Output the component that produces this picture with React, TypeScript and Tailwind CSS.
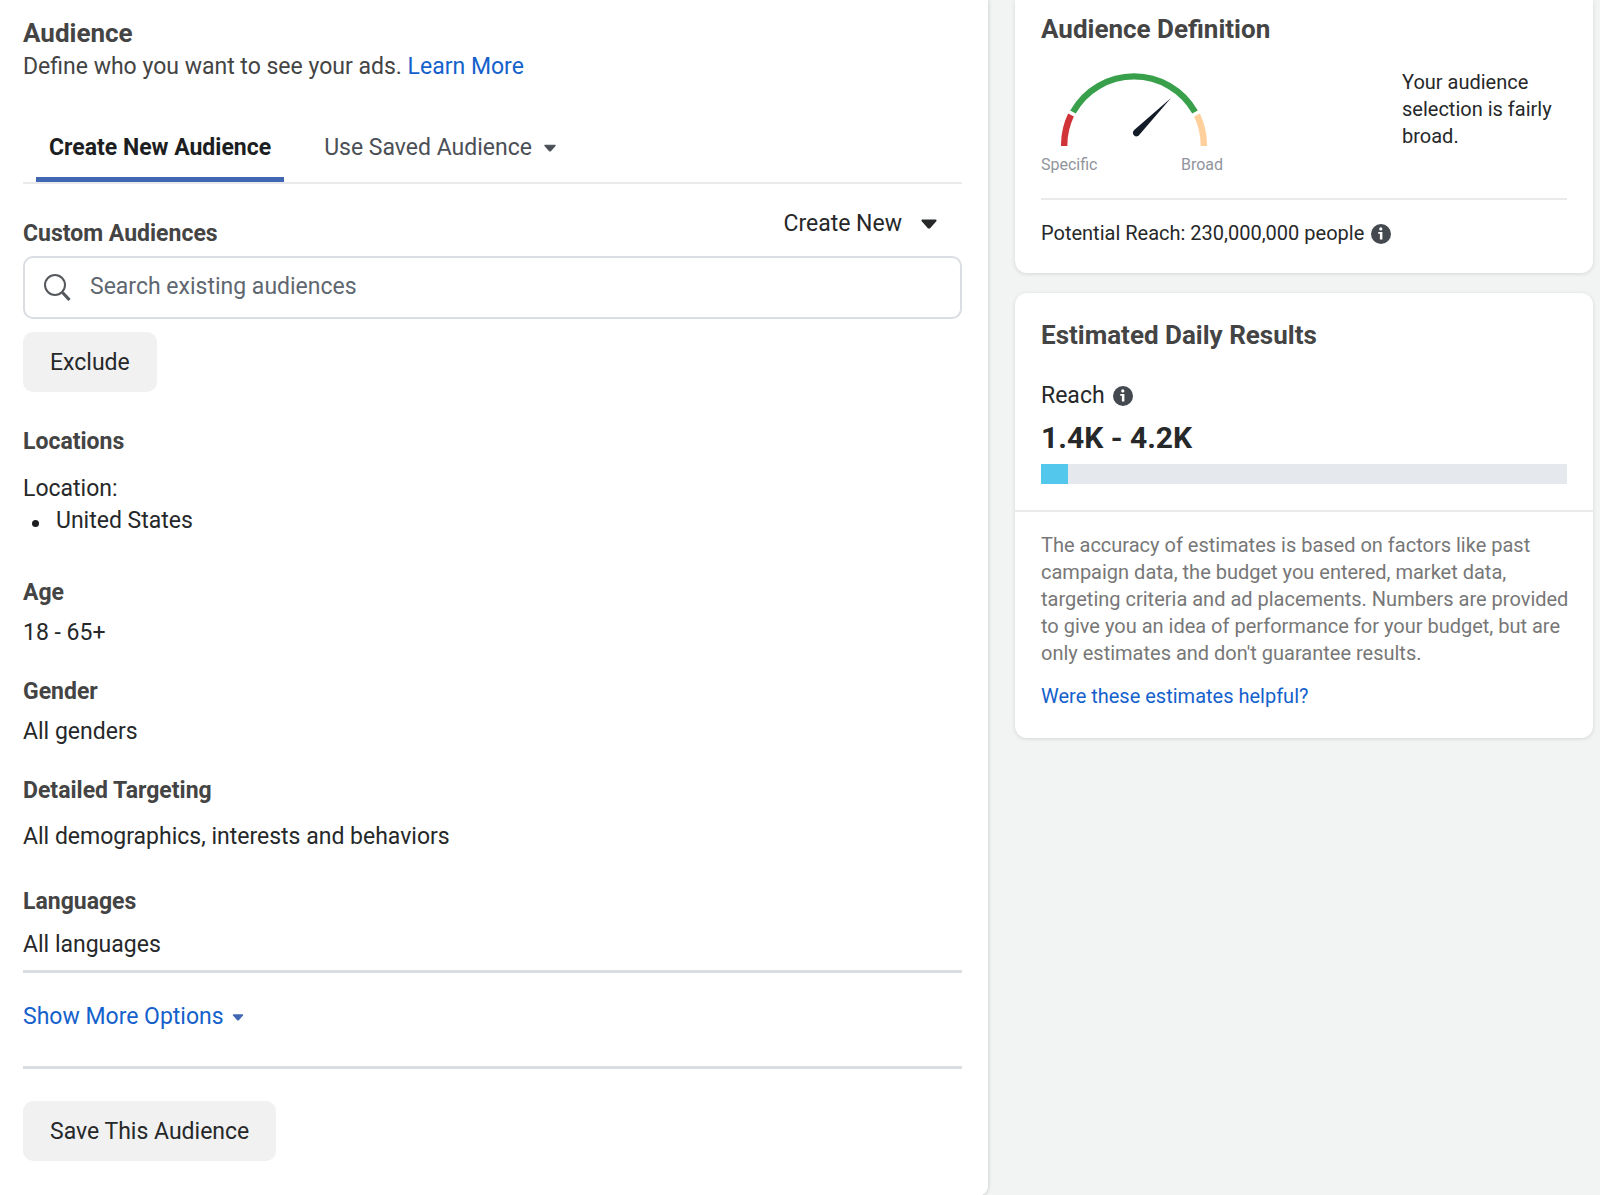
import { useState } from 'react';

const InfoIcon = () => (
  <svg className="h-5 w-5 shrink-0" viewBox="0 0 20 20" aria-hidden="true">
    <circle cx="10" cy="10" r="10" fill="#444950" />
    <circle cx="9.8" cy="4.9" r="1.6" fill="#fff" />
    <path d="M7.2 8h4.2v7.4H8.9V9.7H7.2z" fill="#fff" />
  </svg>
);

const Caret = ({ className = '' }: { className?: string }) => (
  <svg className={className} viewBox="0 0 16 10" aria-hidden="true">
    <path
      d="M1.2 1.2h13.6v.6L9 8.4q-1 1-2 0L1.2 1.8z"
      fill="currentColor"
      stroke="currentColor"
      strokeWidth="1.4"
      strokeLinejoin="round"
    />
  </svg>
);

const Gauge = () => (
  <svg className="ml-5 h-[73px] w-[146px]" viewBox="0 0 146 73" fill="none" aria-hidden="true">
    <path d="M3.2 73A70 70 0 0 1 10 42" stroke="#d13438" strokeWidth="6.4" />
    <path d="M12 39A70 70 0 0 1 134 39" stroke="#38a04a" strokeWidth="6.4" />
    <path d="M136 42A70 70 0 0 1 142.8 73" stroke="#ffd09b" strokeWidth="6.4" />
    <path d="M110 25L78.6 61.6A3.6 3.6 0 1 1 73.2 57z" fill="#141b28" />
  </svg>
);

export default function App() {
  const [query, setQuery] = useState('');
  const reachPercent = 5.1;

  return (
    <div className="grid min-h-screen grid-cols-[988fr_578fr] items-start gap-[27px] bg-[#f2f4f4] pr-[7px] font-['Roboto',sans-serif] text-[23px] leading-8 text-[#262829]">
      {/* Audience form */}
      <main className="min-w-0 rounded-br-[10px] bg-white pt-[15px] pr-[26px] pb-[35px] pl-[23px] shadow-[0_0_4px_rgba(0,0,0,0.2)]">
        <h1 className="text-[26px] leading-9 font-bold text-[#444]">Audience</h1>
        <p className="text-[#444]">
          Define who you want to see your ads.{' '}
          <a href="#learn" className="text-[#1461cc]">Learn More</a>
        </p>

        <div role="tablist" className="mt-[49px] flex gap-[27px] border-b-2 border-[#e9eaeb] px-[13px]">
          <button
            role="tab"
            aria-selected="true"
            className="border-b-[5px] border-[#4267b2] px-[13px] pb-[13px] font-bold text-[#1c1e21]"
          >
            Create New Audience
          </button>
          <button
            role="tab"
            aria-selected="false"
            className="flex items-center gap-3 border-b-[5px] border-transparent px-[13px] pb-[13px] text-[#4b4f56]"
          >
            Use Saved Audience
            <Caret className="h-2 w-3" />
          </button>
        </div>

        <div className="mt-6 flex items-end justify-between">
          <label htmlFor="audience-search" className="font-bold text-[#444]">Custom Audiences</label>
          <button className="flex items-center gap-[19px] pr-[25px] pb-[10px]">
            Create New
            <Caret className="h-[10px] w-4" />
          </button>
        </div>
        <div className="mt-[6px] flex h-[63px] items-center gap-[19px] rounded-[10px] border-2 border-[#dadde1] px-[19px]">
          <svg className="h-7 w-[27px] shrink-0" viewBox="0 0 27 28" fill="none" stroke="#55585c" aria-hidden="true">
            <circle cx="11" cy="11" r="10" strokeWidth="2" />
            <path d="M18.5 18.5l7 7.5" strokeWidth="3.2" />
          </svg>
          <input
            id="audience-search"
            type="text"
            value={query}
            onChange={(e) => setQuery(e.target.value)}
            placeholder="Search existing audiences"
            className="min-w-0 flex-1 bg-transparent pb-px outline-none placeholder:text-[#606770]"
          />
        </div>
        <button className="mt-[13px] h-[60px] rounded-[10px] bg-[#f1f1f1] px-[27px] pt-px">Exclude</button>

        <section className="mt-[34px]">
          <h2 className="font-bold text-[#444]">Locations</h2>
          <p className="mt-[15px]">Location:</p>
          <ul>
            <li className="flex items-center gap-[17px] pl-[9px] before:mt-[5px] before:h-[7px] before:w-[7px] before:rounded-full before:bg-[#1c1e21]">
              United States
            </li>
          </ul>
        </section>
        <section className="mt-10">
          <h2 className="font-bold text-[#444]">Age</h2>
          <p className="mt-2">18 - 65+</p>
        </section>
        <section className="mt-[27px]">
          <h2 className="font-bold text-[#444]">Gender</h2>
          <p className="mt-2">All genders</p>
        </section>
        <section className="mt-[27px]">
          <h2 className="font-bold text-[#444]">Detailed Targeting</h2>
          <p className="mt-[14px]">All demographics, interests and behaviors</p>
        </section>
        <section className="mt-[33px] border-b-[3px] border-[#dadde1] pb-[9px]">
          <h2 className="font-bold text-[#444]">Languages</h2>
          <p className="mt-[11px]">All languages</p>
        </section>

        <div className="border-b-[3px] border-[#dadde1] pt-7 pb-[33px]">
          <button className="flex items-center gap-2 text-[#1461cc]">
            Show More Options
            <Caret className="h-[7px] w-3 text-[#4267b2]" />
          </button>
        </div>
        <button className="mt-8 h-[60px] rounded-[10px] bg-[#f1f1f1] px-[27px] pt-px">Save This Audience</button>
      </main>

      {/* Estimates sidebar */}
      <aside className="flex min-w-0 flex-col gap-5 text-xl leading-[27px]">
        <section className="rounded-b-xl bg-white px-[26px] pt-[13px] pb-[23px] shadow-[0_1px_4px_rgba(0,0,0,0.12)]">
          <h2 className="text-[26px] leading-8 font-bold text-[#444]">Audience Definition</h2>
          <div className="mt-6 flex justify-between border-b-2 border-[#e9eaeb] pb-5">
            <div className="mt-1 w-[182px]">
              <Gauge />
              <div className="mt-[5px] flex justify-between text-base leading-[27px] text-[#90949c]">
                <span>Specific</span>
                <span>Broad</span>
              </div>
            </div>
            <p className="w-[165px]">Your audience selection is fairly broad.</p>
          </div>
          <p className="mt-5 flex items-center gap-[7px] pb-[3px]">
            Potential Reach: 230,000,000 people
            <InfoIcon />
          </p>
        </section>

        <section className="rounded-xl bg-white pt-[26px] pb-7 shadow-[0_1px_4px_rgba(0,0,0,0.12)]">
          <div className="px-[26px]">
            <h2 className="text-[26px] leading-8 font-bold text-[#444]">Estimated Daily Results</h2>
            <p className="mt-[29px] flex items-center gap-2 text-[23px] leading-8">
              Reach
              <InfoIcon />
            </p>
            <p className="mt-1 text-3xl leading-[44px] font-bold">1.4K - 4.2K</p>
            <div className="mt-1 h-5 bg-[#e5e9ed]">
              <div className="h-full bg-[#54c7ec]" style={{ width: `${reachPercent}%` }} />
            </div>
          </div>
          <div className="mt-[26px] border-t-2 border-[#e9eaeb] pt-5 pr-[22px] pl-[26px]">
            <p className="text-[#777]">
              The accuracy of estimates is based on factors like past campaign data, the budget you entered, market
              data, targeting criteria and ad placements. Numbers are provided to give you an idea of performance for
              your budget, but are only estimates and don't guarantee results.
            </p>
            <a href="#feedback" className="mt-4 inline-block text-[#1461cc]">Were these estimates helpful?</a>
          </div>
        </section>
      </aside>
    </div>
  );
}
